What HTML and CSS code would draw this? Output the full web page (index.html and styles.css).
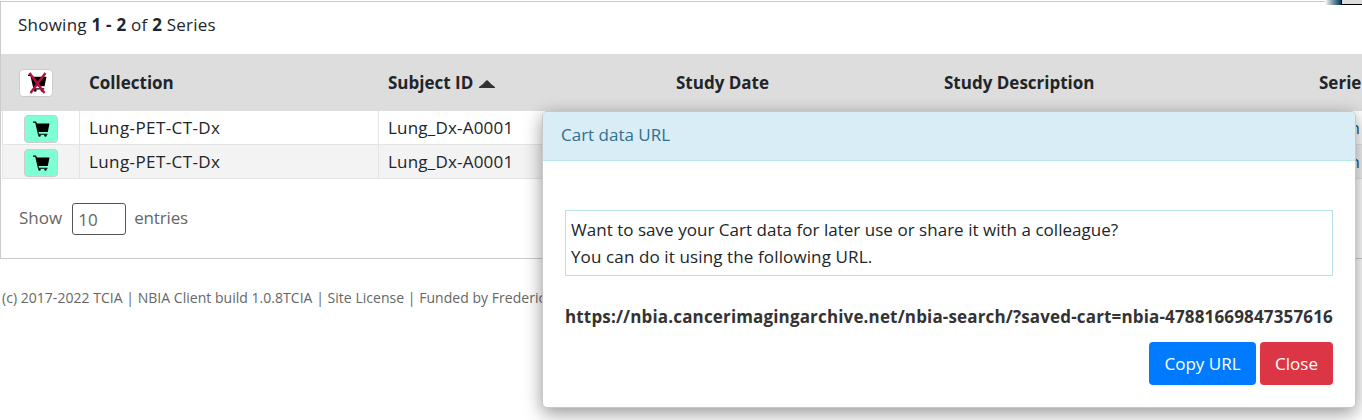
FILE: index.html
```html
<!DOCTYPE html>
<html lang="en">
<head>
<meta charset="utf-8">
<title>NBIA Cart</title>
<link rel="stylesheet" href="styles.css">
</head>
<body>
<svg class="defs" width="0" height="0">
  <symbol id="cart" viewBox="0 0 17 16">
    <path d="M0 .5h3l1 2h12.500L14.800 11H5.500l.5 1.800h8.500v1H5L2.200 1.700H0z"/>
    <circle cx="6.500" cy="14.600" r="1.200"/><circle cx="12.500" cy="14.600" r="1.200"/>
  </symbol>
</svg>
<main class="panel">
  <div class="summary"><span class="t-summary">Showing <b>1 - 2</b> of <b>2</b> Series</span></div>
  <div class="grid head">
    <div class="cell cart-cell"><button class="cart-btn clear"><svg width="21" height="22" viewBox="0 0 21 22"><use href="#cart" x="1" y="2" width="19" height="18"/><path class="cross" d="M2.500 1l15 20M18.500 1l-15 20"/></svg></button></div>
    <div class="cell"><span class="t-col">Collection</span></div>
    <div class="cell"><span class="t-subj">Subject ID</span><svg class="sort" width="16" height="8" viewBox="0 0 16 8"><path d="M0 8V7Q4 4.500 6.500 1.200Q8-.6 9.500 1.200Q12 4.500 16 7V8z"/></svg></div>
    <div class="cell"><span class="t-date">Study Date</span></div>
    <div class="cell"><span class="t-desc">Study Description</span></div>
    <div class="cell"><span class="t-series">Serie</span></div>
  </div>
  <div class="grid row">
    <div class="cell cart-cell"><button class="cart-btn"><svg width="17" height="16"><use href="#cart"/></svg></button></div>
    <div class="cell"><span class="t-lung">Lung-PET-CT-Dx</span></div>
    <div class="cell"><span class="t-id">Lung_Dx-A0001</span></div>
    <div class="cell"></div><div class="cell"></div>
    <div class="cell end">n</div>
  </div>
  <div class="grid row alt">
    <div class="cell cart-cell"><button class="cart-btn"><svg width="17" height="16"><use href="#cart"/></svg></button></div>
    <div class="cell"><span class="t-lung">Lung-PET-CT-Dx</span></div>
    <div class="cell"><span class="t-id">Lung_Dx-A0001</span></div>
    <div class="cell"></div><div class="cell"></div>
    <div class="cell end">n</div>
  </div>
  <div class="pager"><span class="t-show">Show</span><span class="count">10</span><span class="t-entries">entries</span></div>
</main>
<footer class="footer"><span class="t-foot">(c) 2017-2022 TCIA | NBIA Client build 1.0.8TCIA | Site License | Funded by Frederick</span></footer>
<div class="corner"><i class="fade"></i><i class="tab"></i></div>
<section class="dialog">
  <header class="dialog-head"><span class="t-title">Cart data URL</span></header>
  <div class="dialog-body">
    <div class="note"><div><span class="t-note1">Want to save your Cart data for later use or share it with a colleague?</span></div><div><span class="t-note2">You can do it using the following URL.</span></div></div>
    <div class="url"><span class="t-url">https://nbia.cancerimagingarchive.net/nbia-search/?saved-cart=nbia-47881669847357616</span></div>
    <div class="actions"><button class="btn copy"><span class="t-copy">Copy URL</span></button><button class="btn close"><span class="t-close">Close</span></button></div>
  </div>
</section>
</body>
</html>
```
FILE: styles.css
```css
* { box-sizing: border-box; }
body { margin: 0; width: 1362px; height: 420px; overflow: hidden; position: relative; background: #fff; color: #212529; font: 400 17px/27px "Open Sans", "Noto Sans", sans-serif; white-space: nowrap; }
button { font: inherit; padding: 0; }
b { font-weight: 700; }
.defs { position: absolute; }
.panel { height: 258px; margin-top: 1px; border: solid #ccc; border-width: 1px 0 1px 1px; overflow: hidden; }
.summary { height: 52px; padding: 9px 0 0 17px; }
.grid { display: grid; grid-template-columns: 78px 299px 288px 268px 375px 53px; }
.head { height: 57px; background: #ddd; font-weight: 700; }
.cell { display: flex; align-items: center; padding-left: 10px; overflow: hidden; }
.row { height: 34px; margin-left: 1px; grid-template-columns: 76px 299px 288px 268px 375px 53px; border-bottom: 1px solid #e4e4e4; border-left: 1px solid #e4e4e4; }
.row .cell + .cell { border-left: 1px solid #e4e4e4; }
.row .cell { padding-left: 9px; }
.alt { background: #f3f3f3; }
.row .cart-cell { padding: 2px 0 0 21px; }
.head .cart-cell { padding-left: 18px; }
.row .end { justify-content: flex-end; padding-right: 2px; color: #22577f; }
.cart-btn { display: flex; align-items: center; justify-content: center; width: 34px; height: 28px; border: 1px solid #ccc; border-radius: 4px; background: #7fffd4; }
.row .cart-btn svg { margin-top: 1px; }
.cart-btn.clear { background: #fff; }
.cart-btn.clear svg { margin-left: 3px; }
.cross { fill: none; stroke: #b80f3e; stroke-width: 2.4; }
.sort { margin: 3px 0 0 6px; fill: #333; }
.t-summary { letter-spacing: .24px; }
.t-lung { letter-spacing: .4px; }
.t-id { letter-spacing: .2px; }
.t-url { letter-spacing: .155px; }
.t-note1 { letter-spacing: .03px; }
.t-note2 { letter-spacing: .12px; }
.t-foot { letter-spacing: .03px; }
.pager { display: flex; align-items: center; height: 77px; padding-left: 18px; color: #666; }
.count { width: 54px; height: 32px; margin: 2px 8px 0 10px; padding: 2px 5px; border: 1px solid #555; border-radius: 3px; }
.t-entries { letter-spacing: -.15px; }
.footer { padding: 25px 0 0 2px; color: #666; font-size: 14px; }
.corner { position: absolute; top: 0; right: 0; display: flex; width: 37px; height: 5px; background: #fff; }
.fade { width: 16px; background: linear-gradient(90deg, #fff, #7894a8 50%, #003c5c); }
.tab { flex: 1; border: solid #000; border-width: 0 0 1px 1px; background: #ddd; }
.dialog { position: absolute; left: 542px; top: 111px; width: 814px; height: 297px; border: 1px solid #c8c8c8; border-radius: 5px; background: #fff; box-shadow: 0 5px 18px rgba(0,0,0,.42); overflow: hidden; }
.dialog-head { height: 49px; padding: 9px 0 0 18px; border-bottom: 1px solid #b8e8ee; background: #d9edf7; color: #31708f; }
.dialog-body { padding: 49px 22px 0; }
.note { height: 66px; padding: 5px; border: 1px solid #b5e3e9; }
.url { height: 66px; padding-top: 27px; font-weight: 700; color: #333; }
.actions { display: flex; justify-content: flex-end; gap: 4px; }
.btn { height: 43px; border: 0; border-radius: 4px; color: #fff; }
.copy { width: 107px; background: #007bff; }
.close { width: 73px; background: #dc3545; }
```
